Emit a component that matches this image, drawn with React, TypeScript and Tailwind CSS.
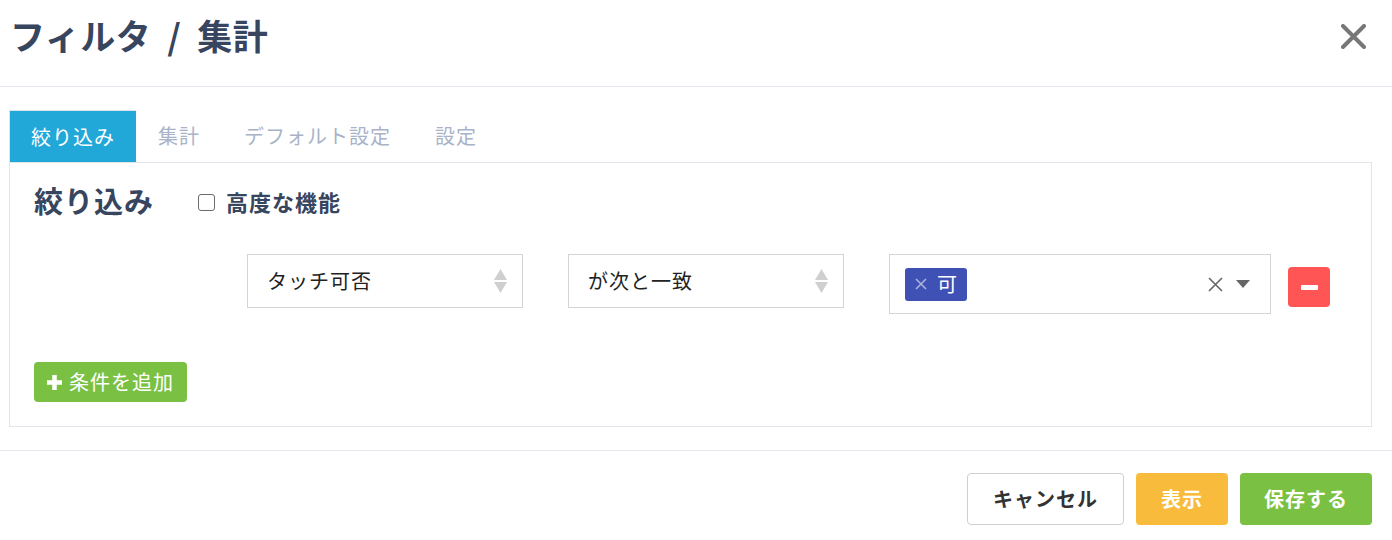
import React, { useState } from 'react';

const font = { fontFamily: '"Noto Sans CJK JP", "Noto Sans", "Liberation Sans", sans-serif' };

const tabs = ['絞り込み', '集計', 'デフォルト設定', '設定'];

const SelectBox = ({ label }: { label: string }) => (
  <div className="w-[276px] h-[54px] border border-[#d4d4d4] bg-white flex items-center justify-between pl-[19px] pr-[15px]">
    <span className="text-[20px] tracking-[1px] text-[#222]">{label}</span>
    <svg width="13" height="24" viewBox="0 0 13 24">
      <path d="M6.5 0 L13 11 L0 11 Z" fill="#cfcfcf" />
      <path d="M0 13 L13 13 L6.5 24 Z" fill="#cfcfcf" />
    </svg>
  </div>
);

const App: React.FC = () => {
  const [activeTab, setActiveTab] = useState(0);
  const [advanced, setAdvanced] = useState(false);

  return (
    <div className="w-[1392px] h-[540px] bg-white overflow-hidden" style={font}>
      {/* ヘッダー */}
      <div className="h-[87px] border-b border-[#e3e7ee] flex items-start justify-between pl-[10px] pr-[26px]">
        <h1 className="mt-[13px] text-[35px] font-bold tracking-[0.5px] text-[#38455f] leading-[44px]">
          フィルタ<span className="mx-[16px]">/</span>集計
        </h1>
        <button className="mt-[24px]">
          <svg width="25" height="25" viewBox="0 0 25 25">
            <path d="M2 2 L23 23 M23 2 L2 23" stroke="#777" strokeWidth="4" strokeLinecap="round" />
          </svg>
        </button>
      </div>

      {/* 本体 */}
      <div className="pt-[23px] pl-[9px] pr-[20px] pb-[23px] border-b border-[#e3e7ee]">
        <ul className="flex border-b border-[#e1e4ea] h-[53px]">
          {tabs.map((t, i) => (
            <li
              key={t}
              onClick={() => setActiveTab(i)}
              className={
                i === activeTab
                  ? 'h-[52px] px-[21px] flex items-center text-[20px] tracking-[1px] text-white bg-[#21a8d9] border-t border-l border-[#dfe4ec] cursor-pointer'
                  : 'h-[52px] px-[22px] flex items-center text-[20px] tracking-[1px] text-[#a9b3c8] cursor-pointer'
              }
            >
              {t}
            </li>
          ))}
        </ul>
        <div className="border-x border-b border-[#e1e4ea] pl-[24px] pt-[20px] pb-[24px]">
          <div className="flex items-center h-[36px]">
            <h2 className="text-[29px] font-bold tracking-[1px] text-[#38455f]">絞り込み</h2>
            <label className="ml-[44px] flex items-center gap-[11px] cursor-pointer">
              <input
                type="checkbox"
                checked={advanced}
                onChange={(e) => setAdvanced(e.target.checked)}
                className="appearance-none w-[17px] h-[17px] mt-[3px] rounded-[3px] border-[1.5px] border-[#6b6b6b] bg-white"
              />
              <span className="text-[22px] font-bold tracking-[1px] text-[#38455f]">高度な機能</span>
            </label>
          </div>

          {/* 条件行 */}
          <div className="mt-[35px] ml-[213px] flex items-start">
            <SelectBox label="タッチ可否" />
            <div className="ml-[45px]">
              <SelectBox label="が次と一致" />
            </div>
            <div className="ml-[45px] w-[382px] h-[60px] border border-[#d4d4d4] bg-white flex items-center pl-[15px] pr-[20px]">
              <span className="h-[33px] px-[10px] rounded-[3px] bg-[#3f51b5] flex items-center gap-[10px]">
                <svg width="12" height="12" viewBox="0 0 12 12">
                  <path d="M1 1 L11 11 M11 1 L1 11" stroke="#aab2dc" strokeWidth="1.6" />
                </svg>
                <span className="text-[20px] text-white leading-none">可</span>
              </span>
              <div className="ml-auto flex items-center gap-[13px]">
                <svg width="15" height="15" viewBox="0 0 15 15">
                  <path d="M1 1 L14 14 M14 1 L1 14" stroke="#666" strokeWidth="1.6" />
                </svg>
                <svg width="14" height="8" viewBox="0 0 14 8">
                  <path d="M0 0 L14 0 L7 8 Z" fill="#666" />
                </svg>
              </div>
            </div>
            <button className="ml-[17px] mt-[13px] w-[42px] h-[40px] rounded-[4px] bg-[#ff5555] flex items-center justify-center">
              <span className="block w-[17px] h-[5px] rounded-[1px] bg-white" />
            </button>
          </div>

          <button className="mt-[48px] h-[40px] pl-[12px] pr-[13px] rounded-[4px] bg-[#7ac143] flex items-center gap-[6px] text-white">
            <svg width="17" height="17" viewBox="0 0 17 17">
              <path d="M8.5 1 V16 M1 8.5 H16" stroke="#fff" strokeWidth="4.5" />
            </svg>
            <span className="text-[20px] tracking-[1px]">条件を追加</span>
          </button>
        </div>
      </div>

      {/* フッター */}
      <div className="flex justify-end gap-[12px] pt-[22px] pr-[20px]">
        <button className="h-[52px] px-[25px] rounded-[4px] border border-[#cfcfcf] bg-white text-[20px] font-bold tracking-[1px] text-[#333]">
          キャンセル
        </button>
        <button className="h-[52px] px-[25px] rounded-[4px] bg-[#f9bb3c] text-[20px] font-bold tracking-[1px] text-white">
          表示
        </button>
        <button className="h-[52px] px-[24px] rounded-[4px] bg-[#7ac143] text-[20px] font-bold tracking-[1px] text-white">
          保存する
        </button>
      </div>
    </div>
  );
};

export default App;
